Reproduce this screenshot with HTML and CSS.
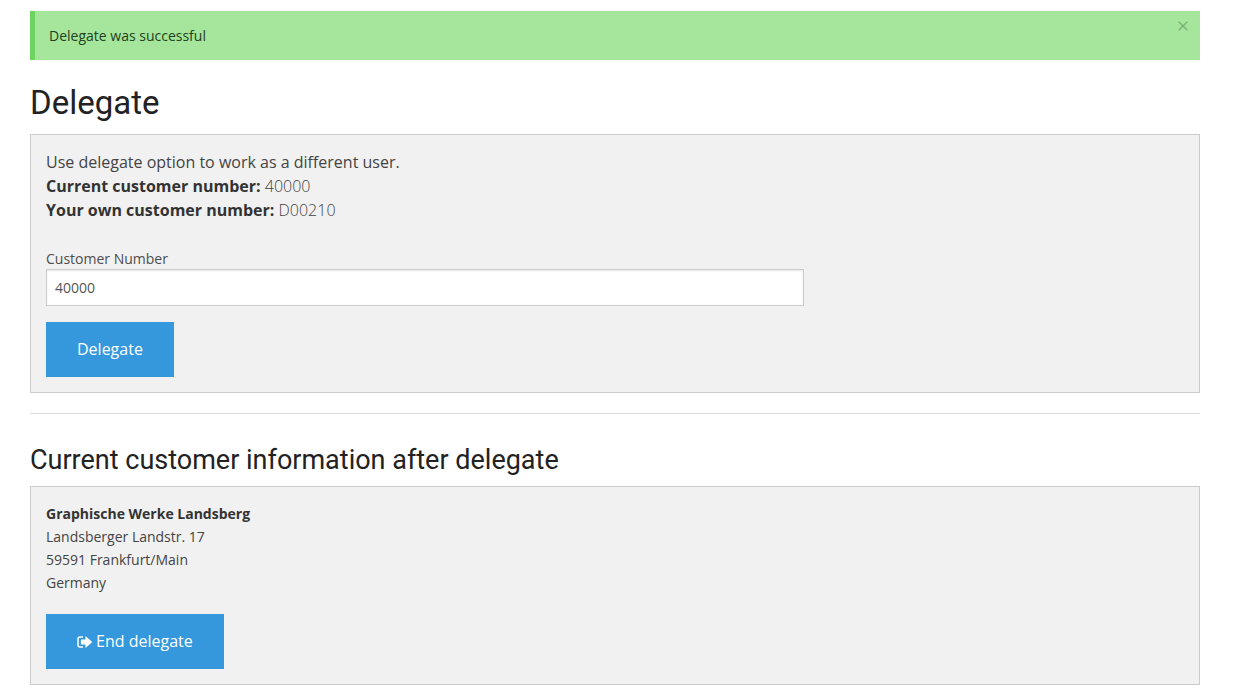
FILE: index.html
```html
<!DOCTYPE html>
<html lang="en">
<head>
<meta charset="utf-8">
<title>Delegate</title>
<meta name="viewport" content="width=device-width, initial-scale=1">
<link rel="stylesheet" href="styles.css">
</head>
<body>
<main class="page">
  <div class="alert" role="status">
    <span>Delegate was successful</span>
    <button class="alert-close" type="button" aria-label="Close">
      <svg width="10" height="10" viewBox="0 0 10 10" aria-hidden="true"><path d="M.7.7l8.6 8.6M9.3.7L.7 9.3" fill="none" stroke="currentColor" stroke-width="1.3"/></svg>
    </button>
  </div>

  <h1 class="title">Delegate</h1>
  <section class="panel">
    <div class="intro">
      <p>Use delegate option to work as a different user.</p>
      <p class="light"><strong class="strong">Current customer number:</strong> 40000</p>
      <p class="light"><strong class="strong">Your own customer number:</strong> D00210</p>
    </div>
    <form class="form">
      <label class="label" for="customer">Customer Number</label>
      <input class="field" id="customer" type="text" value="40000">
      <button class="button" type="button">Delegate</button>
    </form>
  </section>

  <hr class="divider">

  <h2 class="subtitle">Current customer information after delegate</h2>
  <section class="panel">
    <address class="address">
      <strong class="strong">Graphische Werke Landsberg</strong><br>
      Landsberger Landstr. 17<br>
      59591 Frankfurt/Main<br>
      Germany
    </address>
    <button class="button" type="button">
      <svg class="icon" width="15" height="12" viewBox="0 0 15 12" aria-hidden="true"><path d="M6 1H3a2 2 0 0 0-2 2v6a2 2 0 0 0 2 2h3" fill="none" stroke="currentColor" stroke-width="1.5"/><path d="M4.4 3.6h4V.9q0-.9.7-.3l5.6 4.9q.5.5 0 1L9.1 11.4q-.7.6-.7-.3V8.4h-4q-.5 0-.5-.5V4.1q0-.5.5-.5z" fill="currentColor"/></svg>
      End delegate
    </button>
  </section>
</main>
</body>
</html>
```
FILE: styles.css
```css
* {
  box-sizing: border-box;
}

body {
  margin: 0;
  background: #fff;
  color: #444;
  font-family: "Open Sans", sans-serif;
  font-size: 16px;
}

p {
  margin: 0;
}

.page {
  padding: 11px 36px 12px 30px;
}

.alert {
  display: flex;
  justify-content: space-between;
  align-items: flex-start;
  padding: 14px 12px 14px 14px;
  border-left: 5px solid #6cd45f;
  background: #a5e69c;
  color: #234020;
  font-size: 14px;
  line-height: 21px;
}

.alert-close {
  display: flex;
  margin-top: -4px;
  padding: 0;
  border: 0;
  background: none;
  color: #7bac75;
  cursor: pointer;
}

.title,
.subtitle {
  margin: 0;
  color: #222;
  font-family: Roboto, sans-serif;
  font-weight: 400;
}

.title {
  padding: 20px 0 8px;
  font-size: 33px;
  line-height: 46px;
}

.subtitle {
  padding: 28px 0 8px;
  font-size: 27px;
  line-height: 36px;
}

.panel {
  padding: 15px;
  border: 1px solid #ccc;
  background: #f1f1f1;
}

.intro {
  margin-bottom: 26px;
  line-height: 24px;
}

.light {
  font-weight: 300;
}

.strong {
  color: #333;
  font-weight: 700;
}

.form {
  display: flex;
  flex-direction: column;
  align-items: flex-start;
}

.label {
  color: #4d4d4d;
  font-size: 14px;
  line-height: 21px;
}

.field {
  width: 66.6%;
  height: 37px;
  margin: 0 0 16px;
  padding: 8px;
  border: 1px solid #ccc;
  border-radius: 0;
  background: #fff;
  box-shadow: inset 0 1px 2px rgba(0, 0, 0, 0.1);
  color: #555;
  font-family: inherit;
  font-size: 14px;
}

.button {
  display: inline-flex;
  align-items: center;
  gap: 4px;
  padding: 16px 31px;
  border: 0;
  background: #3598dc;
  color: #fff;
  font-family: inherit;
  font-size: 16px;
  line-height: 23px;
  cursor: pointer;
}

.divider {
  margin: 20px 0 0;
  border: 0;
  border-top: 1px solid #ddd;
}

.address {
  margin-bottom: 20px;
  font-size: 14px;
  font-style: normal;
  line-height: 23px;
}
```
